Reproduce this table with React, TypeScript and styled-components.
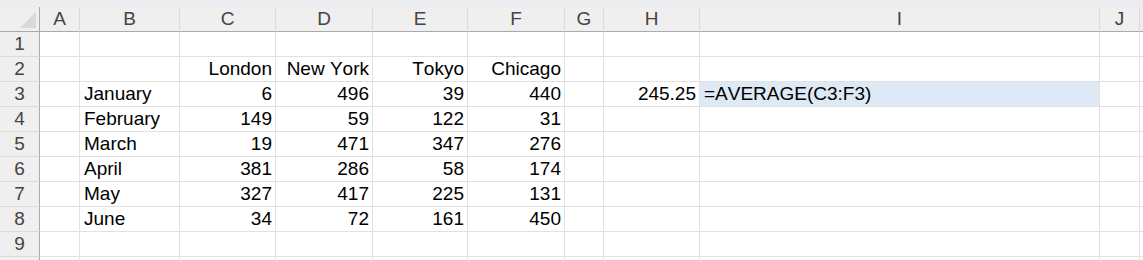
import styled, { createGlobalStyle } from "styled-components";

const GlobalStyle = createGlobalStyle`
  html, body {
    margin: 0;
    padding: 0;
    background: #ffffff;
    overflow: hidden;
  }
  body {
    font-family: "Liberation Sans", Arial, sans-serif;
  }
`;

const columns = [
  { name: "A", width: 40 },
  { name: "B", width: 100 },
  { name: "C", width: 96 },
  { name: "D", width: 97 },
  { name: "E", width: 95 },
  { name: "F", width: 97 },
  { name: "G", width: 39 },
  { name: "H", width: 96 },
  { name: "I", width: 400 },
  { name: "J", width: 40 },
];

type CellValue = { text: string; align?: "left" | "right"; selected?: boolean };

// sparse sheet contents: row -> column -> value
const cells: Record<number, Record<string, CellValue>> = {
  2: {
    C: { text: "London", align: "right" },
    D: { text: "New York", align: "right" },
    E: { text: "Tokyo", align: "right" },
    F: { text: "Chicago", align: "right" },
  },
  3: {
    B: { text: "January" },
    C: { text: "6", align: "right" },
    D: { text: "496", align: "right" },
    E: { text: "39", align: "right" },
    F: { text: "440", align: "right" },
    H: { text: "245.25", align: "right" },
    I: { text: "=AVERAGE(C3:F3)", selected: true },
  },
  4: {
    B: { text: "February" },
    C: { text: "149", align: "right" },
    D: { text: "59", align: "right" },
    E: { text: "122", align: "right" },
    F: { text: "31", align: "right" },
  },
  5: {
    B: { text: "March" },
    C: { text: "19", align: "right" },
    D: { text: "471", align: "right" },
    E: { text: "347", align: "right" },
    F: { text: "276", align: "right" },
  },
  6: {
    B: { text: "April" },
    C: { text: "381", align: "right" },
    D: { text: "286", align: "right" },
    E: { text: "58", align: "right" },
    F: { text: "174", align: "right" },
  },
  7: {
    B: { text: "May" },
    C: { text: "327", align: "right" },
    D: { text: "417", align: "right" },
    E: { text: "225", align: "right" },
    F: { text: "131", align: "right" },
  },
  8: {
    B: { text: "June" },
    C: { text: "34", align: "right" },
    D: { text: "72", align: "right" },
    E: { text: "161", align: "right" },
    F: { text: "450", align: "right" },
  },
};

const rows = [1, 2, 3, 4, 5, 6, 7, 8, 9];

const App = () => {
  return (
    <>
      <GlobalStyle />
      <Wrapper>
        <TopStrip />
        <Grid $template={`40px ${columns.map((c) => `${c.width}px`).join(" ")} 1fr`}>
          <Corner>
            <CornerTriangle />
          </Corner>
          {columns.map((c) => (
            <ColumnHeader key={c.name}>{c.name}</ColumnHeader>
          ))}
          <ColumnHeader $last />
          {rows.map((r) => (
            <Row key={r} r={r} label={String(r)} />
          ))}
          {/* next row peeks in under the bottom edge */}
          <Row r={10} label="" />
        </Grid>
      </Wrapper>
    </>
  );
};

const Row = ({ r, label }: { r: number; label: string }) => {
  const data = cells[r] || {};
  return (
    <>
      <RowHeader>{label}</RowHeader>
      {columns.map((c) => {
        const v = data[c.name];
        return (
          <Cell key={c.name} $align={v?.align || "left"} $selected={!!v?.selected}>
            {v?.text}
          </Cell>
        );
      })}
      <Cell $align="left" $selected={false} />
    </>
  );
};

export default App;

const Wrapper = styled.div`
  width: 1143px;
  height: 260px;
  overflow: hidden;
  background: #ffffff;
`;

const TopStrip = styled.div`
  height: 7px;
  background: #ebedf0;
`;

const Grid = styled.div<{ $template: string }>`
  display: grid;
  grid-template-columns: ${(p) => p.$template};
  grid-auto-rows: 25px;
  font-size: 19px;
  line-height: 24px;
  font-kerning: none;
`;

const Corner = styled.div`
  position: relative;
  background: #efefef;
  border-right: 1px solid #a9a9a9;
  border-bottom: 1px solid #a9a9a9;
  box-sizing: border-box;
`;

const CornerTriangle = styled.div`
  position: absolute;
  right: 3px;
  bottom: 3px;
  width: 0;
  height: 0;
  border-left: 16px solid transparent;
  border-bottom: 16px solid #d9d9d9;
`;

const ColumnHeader = styled.div<{ $last?: boolean }>`
  box-sizing: border-box;
  background: #efefef;
  border-right: ${(p) => (p.$last ? "none" : "1px solid #dadada")};
  border-bottom: 1px solid #a9a9a9;
  color: #444444;
  text-align: center;
  overflow: hidden;
`;

const RowHeader = styled.div`
  box-sizing: border-box;
  background: #efefef;
  border-right: 1px solid #a9a9a9;
  border-bottom: 1px solid #dadada;
  color: #444444;
  text-align: center;
`;

const Cell = styled.div<{ $align: "left" | "right"; $selected: boolean }>`
  box-sizing: border-box;
  border-right: 1px solid #e1e1e1;
  border-bottom: 1px solid #e1e1e1;
  background: ${(p) => (p.$selected ? "#dde9f5" : "#ffffff")};
  color: #000000;
  text-align: ${(p) => p.$align};
  padding: 0 3px 0 4px;
  white-space: nowrap;
  overflow: hidden;
`;
